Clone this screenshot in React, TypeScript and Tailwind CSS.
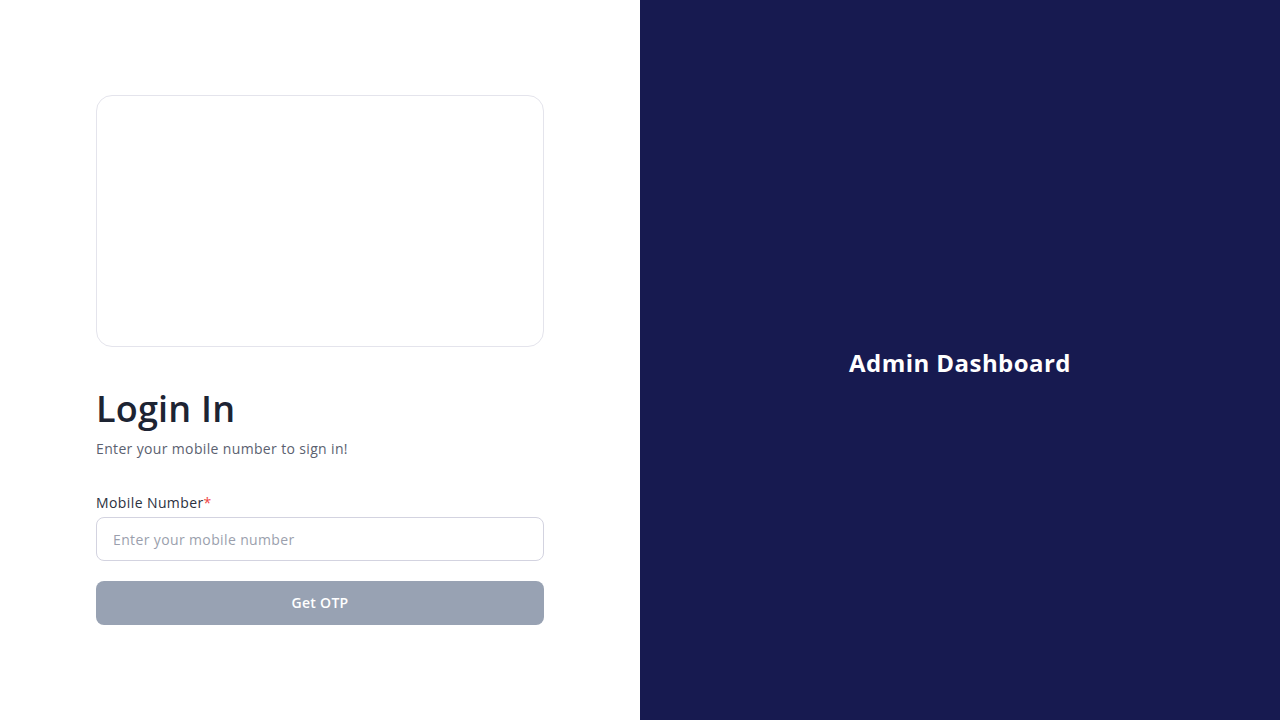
import { useState } from 'react'

const font = { fontFamily: '"Open Sans", "Noto Sans", sans-serif' }

export default function App() {
    const [mobile, setMobile] = useState('')

    return (
        <div className="flex h-[720px] w-full" style={font}>
            <div className="flex w-1/2 items-center justify-center bg-white">
                <div className="flex w-[448px] flex-col">
                    <div className="h-[252px] rounded-2xl border border-[#e4e4ec] bg-white" />

                    <h1 className="mt-10 pt-0.5 text-[36px] font-semibold leading-[40px] tracking-[0.2px] text-[#1d2433]">Login In</h1>
                    <p className="mt-2.5 text-sm leading-5 tracking-[0.35px] text-[#5b6170]">Enter your mobile number to sign in!</p>

                    <label className="mt-8 pt-0.5 text-sm font-medium leading-5 tracking-[0.4px] text-[#2b3140]">
                        Mobile Number<span className="text-[#ef4444]">*</span>
                    </label>
                    <input
                        value={mobile}
                        onChange={e => setMobile(e.target.value)}
                        placeholder="Enter your mobile number"
                        className="mt-1 h-11 w-full rounded-lg border border-[#d3d3e0] px-4 text-sm tracking-[0.37px] text-gray-800 placeholder:text-[#9b9fad] focus:outline-none"
                    />

                    <button
                        disabled={!mobile}
                        className="mt-5 h-11 w-full rounded-lg bg-[#98a2b3] text-sm font-semibold tracking-[0.3px] text-white"
                    >
                        Get OTP
                    </button>
                </div>
            </div>

            <div className="flex w-1/2 items-center justify-center bg-[#171a50] pt-1.5">
                <h2 className="text-2xl font-bold tracking-[0.45px] text-white">Admin Dashboard</h2>
            </div>
        </div>
    )
}
